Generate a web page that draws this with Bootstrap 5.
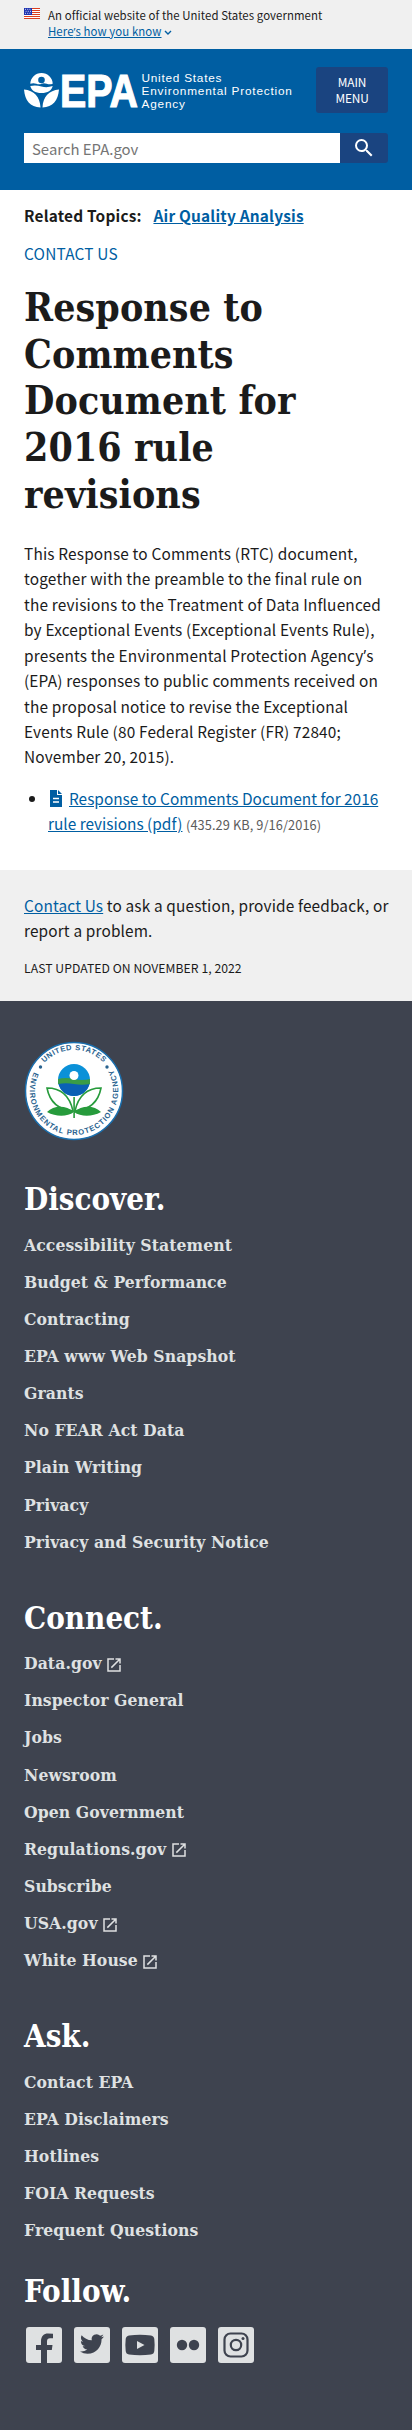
<!DOCTYPE html>
<html lang="en">
<head>
<meta charset="utf-8">
<meta name="viewport" content="width=device-width, initial-scale=1">
<title>Response to Comments Document for 2016 rule revisions | US EPA</title>
<link rel="stylesheet" href="https://cdn.jsdelivr.net/npm/bootstrap@5.3.0/dist/css/bootstrap.min.css">
<style>
body{font-family:"Noto Sans CJK SC","Noto Sans",sans-serif;font-size:15.4px;letter-spacing:.08px;line-height:25.4px;color:#1b1b1b;background:#fff}
a{color:#005ea2}
.apos{font-family:"Open Sans",sans-serif;line-height:1}
.gov-banner{background:#f0f0f0;height:49px;font-size:11.4px;line-height:16px;padding-top:7px}
.flag{margin-top:1px;flex:none}
.epa-header{background:#005ea2;height:141px;padding-top:18px}
.logo{overflow:visible}
.main-menu{width:72px;height:46px;flex:none;background:#1a4480;color:#fff;border:0;border-radius:3px;font-size:11.9px;letter-spacing:-.15px;line-height:16px;padding:0}
.search-field{height:30px;border:0;border-radius:0;font-size:14.9px;line-height:20px;padding:2px 8px;color:#1b1b1b}
.search-field::placeholder{color:#757575;opacity:1}
.search-btn{width:48px;height:30px;flex:none;background:#1a4480;border-radius:0 3px 3px 0;padding:0;border:0}
.related{margin-top:13px;font-weight:700;letter-spacing:.2px}
.site-name{margin-top:13px;letter-spacing:.2px}
.serif{font-family:"DejaVu Serif Condensed","DejaVu Serif",serif;font-stretch:condensed;font-weight:700}
.page-title{font-size:38.9px;line-height:46.75px;letter-spacing:.1px;margin:17px 0 23.5px}
.intro{letter-spacing:.17px}
.doc-list{padding-left:24px;margin-top:16px}
.doc-list svg{vertical-align:-2px;margin-right:5px}
.doc-list a{letter-spacing:0}
.file-meta{color:#5c5c5c;font-size:12.8px;line-height:1}
.contact-strip{background:#f0f0f0;height:131px;margin-top:33.5px;padding-top:23px;letter-spacing:.14px}
.updated{font-size:12.2px;letter-spacing:.05px;margin-top:12px}
.epa-footer{background:#3e434f;color:#fff;height:1429px;padding-top:39px}
.foot-title{font-size:31px;line-height:40px;letter-spacing:0;margin:42px 0 0}
.foot-links{font-size:17.4px;line-height:27px;display:flex;flex-direction:column;gap:10.15px;margin:12.5px 0 0}
.foot-links a{height:27px;color:#dfe1e2;text-decoration:none}
.foot-links svg{margin-left:-2px}
.socials{gap:12px;padding-left:2px}
</style>
</head>
<body>
<section class="gov-banner px-4 d-flex">
<svg class="flag" width="16" height="11" viewBox="0 0 16 11"><path fill="#fff" d="M0 0h16v11H0z"/><path stroke="#db3e1f" stroke-width="1" d="M0 .5h16M0 2.5h16M0 4.5h16M0 6.5h16M0 8.5h16M0 10.5h16"/><path fill="#1e33b1" d="M0 0h8v7H0z"/><path stroke="#fff" stroke-width=".8" stroke-dasharray="1 1.2" d="M1 1.3h6.5M1.6 3.3h6M1 5.3h6.5"/></svg>
<div class="ms-2 text-nowrap">An official website of the United States government<br><a href="#">Here<span class="apos">’</span>s how you know</a> <svg width="8" height="6" viewBox="0 0 8 6"><path d="M1 1l3 3 3-3" fill="none" stroke="#005ea2" stroke-width="1.4"/></svg></div>
</section>
<header class="epa-header px-4">
<div class="d-flex justify-content-between">
<svg class="mt-1 logo" width="276" height="42" viewBox="0 0 276 42" fill="#fff">
<path d="M6.300 12.800a11.200 10.800 0 0 1 22.400 0q-3 1-6 0t-5.200 0-5.200 0-6 0z"/>
<circle cx="17.500" cy="9" r="3.300" fill="#005ea2"/>
<path d="M6.300 15q5.600-1 11.200 .5t11.200-.5c-1 4.500-5 7-11.200 7s-10.200-2.500-11.200-7z"/>
<path d="M0 18.500c10 1 16 7 16.500 18C6 35.500 1 30 0 18.500zM35 18.500c-10 1-16 7-16.500 18C29 35.500 34 30 35 18.500z"/>
<text x="36" y="36" letter-spacing="0" font-family="Liberation Sans" font-weight="700" font-size="47" textLength="78" lengthAdjust="spacingAndGlyphs" stroke="#fff" stroke-width="1.200">EPA</text>
<g font-family="Liberation Sans" font-size="11.800"><text x="117.500" y="11" textLength="80">United States</text><text x="117.500" y="23.800" textLength="150.500">Environmental Protection</text><text x="117.500" y="36.500" textLength="43.500">Agency</text></g>
</svg>
<button class="main-menu btn">MAIN<br>MENU</button>
</div>
<form class="d-flex mt-3 pt-1">
<input class="search-field form-control" placeholder="Search EPA.gov" aria-label="Search">
<button class="search-btn btn d-flex align-items-center justify-content-center" type="button" aria-label="Search"><svg width="24" height="24" viewBox="0 0 24 24" fill="#fff"><path d="M15.500 14h-.79l-.28-.27A6.470 6.470 0 0 0 16 9.500 6.500 6.500 0 1 0 9.500 16c1.610 0 3.090-.59 4.230-1.570l.27.28v.79l5 4.990L20.490 19l-4.990-5zm-6 0C7.010 14 5 11.990 5 9.500S7.010 5 9.500 5 14 7.010 14 9.500 11.990 14 9.500 14z"/></svg></button>
</form>
</header>
<main>
<div class="px-4">
<div class="related">Related Topics: <a class="ms-2" href="#">Air Quality Analysis</a></div>
<div class="site-name"><a class="text-decoration-none" href="#">CONTACT US</a></div>
<h1 class="page-title serif text-nowrap">Response to<br>Comments<br>Document for<br>2016 rule<br>revisions</h1>
<p class="intro m-0 text-nowrap">This Response to Comments (RTC) document,<br>together with the preamble to the final rule on<br>the revisions to the Treatment of Data Influenced<br>by Exceptional Events (Exceptional Events Rule),<br>presents the Environmental Protection Agency<span class="apos">’</span>s<br>(EPA) responses to public comments received on<br>the proposal notice to revise the Exceptional<br>Events Rule (80 Federal Register (FR) 72840;<br>November 20, 2015).</p>
<ul class="doc-list mb-0 text-nowrap"><li><svg width="16" height="17" viewBox="0 0 16 17"><path fill="#005ea2" d="M2 0h7v5h5v12H2zM10 0l4 4h-4z"/><path stroke="#fff" stroke-width="1.300" d="M5 8.500h6M5 12h6"/></svg><a href="#">Response to Comments Document for 2016<br>rule revisions (pdf)</a> <span class="file-meta">(435.29 KB, 9/16/2016)</span></li></ul>
</div>
<section class="contact-strip px-4 text-nowrap"><a href="#">Contact Us</a> to ask a question, provide feedback, or<br>report a problem.<div class="updated">LAST UPDATED ON NOVEMBER 1, 2022</div></section>
</main>
<footer class="epa-footer px-4">
<svg class="d-block" width="100" height="102" viewBox="0 0 100 102">
<defs><path id="top" d="M9 51a41 41 0 0 1 82 0"/><path id="low" d="M11.300 29.500A44.200 44.200 0 1 0 88.700 29.500"/></defs>
<circle cx="50" cy="51" r="48.500" fill="#fff" stroke="#1a6fae" stroke-width="1.500"/>
<g font-family="Liberation Sans" font-weight="700" font-size="7.600" fill="#2a638f" letter-spacing="0"><text><textPath href="#top" startOffset="31" textLength="66">UNITED STATES</textPath></text>
<text><textPath href="#low" textLength="180" startOffset="3">ENVIRONMENTAL PROTECTION AGENCY</textPath></text></g>
<circle cx="16.500" cy="27" r="1.700" fill="#2a638f"/><circle cx="83" cy="27" r="1.700" fill="#2a638f"/>
<circle cx="50" cy="40" r="16" fill="#0b91d8"/><path fill="#0a60b4" d="M34.200 42.500h31.600A16 16 0 0 1 34.200 42.500z"/><path fill="#3a9c47" d="M34 39q8-2 16 0t16 0v5q-8 1.500-16 0t-16 0z"/><circle cx="50" cy="35.500" r="4.500" fill="#fff"/>
<path fill="#fff" stroke="#279b3c" stroke-width="1.600" d="M49 71Q27 69 23 48q21 0 26 23zM51 71q22-2 26-23-21 0-26 23z"/>
<path fill="#279b3c" d="M49.300 57h1.600v21h-1.600zM50 72c-8-7-20-7-27 0 9 5 20 5 27 0zM50 72c8-7 20-7 27 0-9 5-20 5-27 0z"/>
</svg>
<h2 class="foot-title serif" style="margin-top:37px">Discover.</h2>
<nav class="foot-links serif"><a href="#">Accessibility Statement</a><a href="#">Budget &amp; Performance</a><a href="#">Contracting</a><a href="#">EPA www Web Snapshot</a><a href="#">Grants</a><a href="#">No FEAR Act Data</a><a href="#">Plain Writing</a><a href="#">Privacy</a><a href="#">Privacy and Security Notice</a></nav>
<h2 class="foot-title serif">Connect.</h2>
<svg width="0" height="0" class="d-none"><symbol id="ext" viewBox="0 0 24 24"><path fill="#dfe1e2" d="M19 19H5V5h7V3H3v18h18v-9h-2v7zM14 3v2h3.590l-9.830 9.830 1.410 1.410L19 6.410V10h2V3h-7z"/></symbol></svg>
<nav class="foot-links serif"><a href="#">Data.gov <svg width="18" height="18"><use href="#ext"/></svg></a><a href="#">Inspector General</a><a href="#">Jobs</a><a href="#">Newsroom</a><a href="#">Open Government</a><a href="#">Regulations.gov <svg width="18" height="18"><use href="#ext"/></svg></a><a href="#">Subscribe</a><a href="#">USA.gov <svg width="18" height="18"><use href="#ext"/></svg></a><a href="#">White House <svg width="18" height="18"><use href="#ext"/></svg></a></nav>
<h2 class="foot-title serif">Ask.</h2>
<nav class="foot-links serif"><a href="#">Contact EPA</a><a href="#">EPA Disclaimers</a><a href="#">Hotlines</a><a href="#">FOIA Requests</a><a href="#">Frequent Questions</a></nav>
<h2 class="foot-title serif" style="margin-top:27px">Follow.</h2>
<div class="d-flex mt-3 socials">
<svg width="36" height="36" viewBox="0 0 36 36"><rect width="36" height="36" rx="3" fill="#dfe1e2"/><path fill="#3e434f" d="M15 36V23h-5v-5h5v-3.500C15 9 18 6.500 22 6.500q3 0 5 .3v4.400h-3q-3 0-3 3V18h5.500l-.7 5H21v13z"/></svg>
<svg width="36" height="36" viewBox="0 0 36 36"><rect width="36" height="36" rx="3" fill="#dfe1e2"/><path fill="#3e434f" transform="translate(6 5)" d="M23.950 4.570a10 10 0 0 1-2.820.77 4.960 4.960 0 0 0 2.160-2.720c-.95.550-2 .950-3.130 1.180a4.920 4.920 0 0 0-8.380 4.480C7.690 8.090 4.070 6.130 1.640 3.160a4.820 4.820 0 0 0-.67 2.480c0 1.710.87 3.210 2.190 4.100a4.900 4.900 0 0 1-2.230-.62v.06a4.920 4.920 0 0 0 3.950 4.830 5 5 0 0 1-2.210.08 4.940 4.940 0 0 0 4.600 3.420A9.870 9.870 0 0 1 0 19.540a13.990 13.990 0 0 0 7.560 2.210c9.050 0 13.990-7.500 13.990-13.980 0-.21 0-.42-.02-.63a9.940 9.940 0 0 0 2.420-2.570z"/></svg>
<svg width="36" height="36" viewBox="0 0 36 36"><rect width="36" height="36" rx="3" fill="#dfe1e2"/><path fill="#3e434f" d="M7 8.500q11-1.500 22 0 3 .5 3.300 3.500.7 6 0 12-.3 3-3.300 3.500-11 1.500-22 0-3-.5-3.300-3.500-.7-6 0-12Q4 9 7 8.500z"/><path fill="#dfe1e2" d="M15 14l7.500 4-7.500 4z"/></svg>
<svg width="36" height="36" viewBox="0 0 36 36"><rect width="36" height="36" rx="3" fill="#dfe1e2"/><circle cx="12" cy="18" r="5.200" fill="#3e434f"/><circle cx="24" cy="18" r="5.200" fill="#3e434f"/></svg>
<svg width="36" height="36" viewBox="0 0 36 36"><rect width="36" height="36" rx="3" fill="#dfe1e2"/><g fill="none" stroke="#3e434f" stroke-width="2.200"><rect x="6.500" y="6.500" width="23" height="23" rx="6"/><circle cx="18" cy="18" r="5.200"/></g><circle cx="25" cy="11.500" r="1.500" fill="#3e434f"/></svg>
</div>
</footer>
<script src="https://cdn.jsdelivr.net/npm/bootstrap@5.3.0/dist/js/bootstrap.bundle.min.js"></script>
</body>
</html>
